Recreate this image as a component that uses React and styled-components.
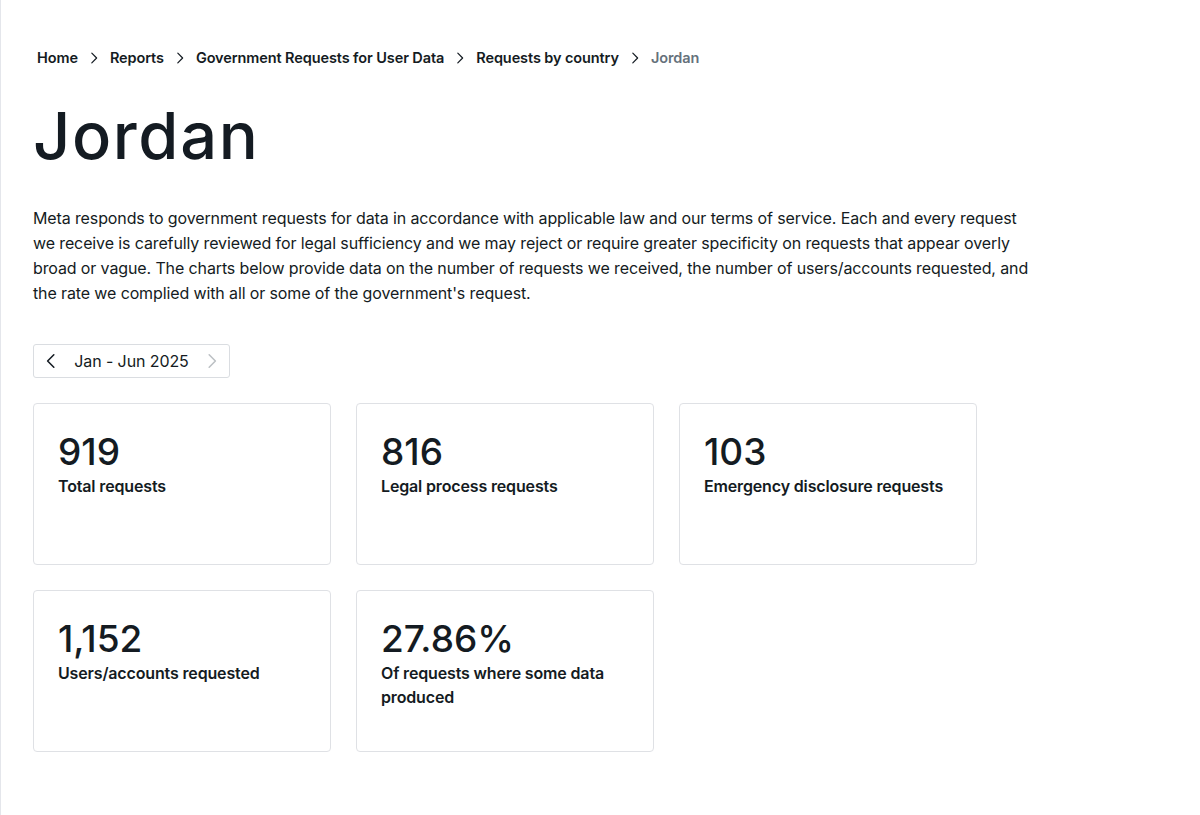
import React from 'react';
import styled, { createGlobalStyle } from 'styled-components';

const GlobalStyle = createGlobalStyle`
    html, body {
        margin: 0;
        padding: 0;
        background: #ffffff;
    }
    body {
        font-family: Inter, "Noto Sans", sans-serif;
        color: #141b22;
        -webkit-font-smoothing: antialiased;
    }
`

const Page = styled.main`
    min-height: 815px;
    box-sizing: border-box;
    border-left: 1px solid #e4e6eb;
    padding: 46px 0 40px 32px;
`

const Crumbs = styled.nav`
    display: flex;
    align-items: center;
    gap: 9px;
    padding-left: 4px;
    font-size: 14.5px;
    font-weight: 600;
    line-height: 24px;
    letter-spacing: -0.1px;
`

const Crumb = styled.a`
    color: ${(p) => (p.$current ? '#65717b' : '#141b22')};
    text-decoration: none;
`

const Sep = styled.span`
    display: flex;
    color: #141b22;
`

const Title = styled.h1`
    margin: 26px 0 0;
    font-size: 65px;
    font-weight: 500;
    line-height: 80px;
    letter-spacing: 1.6px;
    color: #141b22;
`

const Intro = styled.p`
    margin: 30px 0 0;
    max-width: 1002px;
    font-size: 16px;
    line-height: 25px;
    letter-spacing: -0.12px;
    color: #141b22;
`

const Period = styled.div`
    display: inline-flex;
    align-items: center;
    margin-top: 38px;
    height: 34px;
    box-sizing: border-box;
    width: 197px;
    border: 1px solid #dadde1;
    border-radius: 3px;
    padding: 0 8px 0 8px;
    justify-content: space-between;
    font-size: 16px;
    letter-spacing: -0.1px;
`

const Arrow = styled.button`
    display: flex;
    border: none;
    background: none;
    padding: 0;
    color: ${(p) => (p.disabled ? '#bcc0c4' : '#141b22')};
    cursor: ${(p) => (p.disabled ? 'default' : 'pointer')};
`

const Cards = styled.section`
    display: grid;
    grid-template-columns: repeat(3, 298px);
    grid-auto-rows: 162px;
    gap: 25px;
    margin-top: 25px;
`

const Card = styled.div`
    box-sizing: border-box;
    border: 1px solid #dfe1e5;
    border-radius: 4px;
    padding: 26px 24px;
`

const Value = styled.div`
    font-size: 37px;
    font-weight: 500;
    line-height: 44px;
    color: #141b22;
`

const Label = styled.div`
    font-size: 16px;
    font-weight: 600;
    line-height: 24px;
    letter-spacing: -0.15px;
    color: #141b22;
`

const Chevron = ({ dir = 'right', size = 14 }) => (
    <svg width={size} height={size} viewBox="0 0 16 16" fill="none" stroke="currentColor" strokeWidth="1.4" strokeLinecap="round" strokeLinejoin="round">
        {dir === 'right' ? <path d="M5.5 2.5 11 8l-5.5 5.5" /> : <path d="M10.5 2.5 5 8l5.5 5.5" />}
    </svg>
);

const crumbs = ['Home', 'Reports', 'Government Requests for User Data', 'Requests by country', 'Jordan'];

const stats = [
    { value: '919', label: 'Total requests' },
    { value: '816', label: 'Legal process requests' },
    { value: '103', label: 'Emergency disclosure requests' },
    { value: '1,152', label: 'Users/accounts requested' },
    { value: '27.86%', label: 'Of requests where some data produced' },
];

function App() {
    return (
        <>
            <GlobalStyle />
            <Page>
                <Crumbs>
                    {crumbs.map((c, i) => (
                        <React.Fragment key={c}>
                            {i > 0 && <Sep><Chevron /></Sep>}
                            <Crumb href="#" $current={i === crumbs.length - 1}>{c}</Crumb>
                        </React.Fragment>
                    ))}
                </Crumbs>
                <Title>Jordan</Title>
                <Intro>
                    Meta responds to government requests for data in accordance with applicable law and our terms of service. Each and every request we receive is carefully reviewed for legal sufficiency and we may reject or require greater specificity on requests that appear overly broad or vague. The charts below provide data on the number of requests we received, the number of users/accounts requested, and the rate we complied with all or some of the government's request.
                </Intro>
                <Period>
                    <Arrow><Chevron dir="left" size={18} /></Arrow>
                    <span>Jan - Jun 2025</span>
                    <Arrow disabled><Chevron size={18} /></Arrow>
                </Period>
                <Cards>
                    {stats.map((s) => (
                        <Card key={s.value}>
                            <Value>{s.value}</Value>
                            <Label>{s.label}</Label>
                        </Card>
                    ))}
                </Cards>
            </Page>
        </>
    );
}

export default App;
